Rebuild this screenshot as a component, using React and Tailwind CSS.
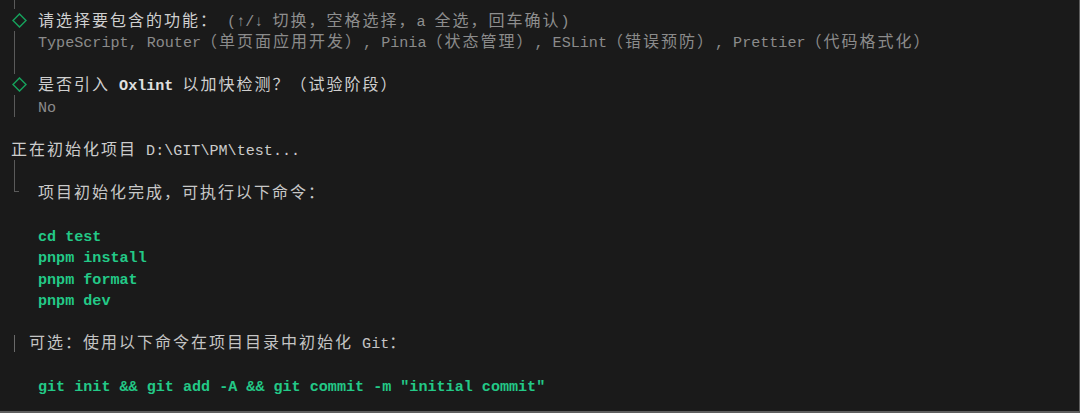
import React from "react";

const CJK = /([\u2E80-\u9FFF\u3000-\u303F\uFF00-\uFFEF]+)/;

function T({ children }) {
  const parts = String(children).split(CJK);
  return parts.map((p, i) =>
    i % 2 ? (
      <span key={i} className="text-[16px] tracking-[2px]">
        {p}
      </span>
    ) : (
      <React.Fragment key={i}>{p}</React.Fragment>
    )
  );
}

function Row({ children }) {
  return <div className="flex h-[21.5px] items-center whitespace-pre leading-[21.5px]">{children}</div>;
}

function Txt({ className, children }) {
  return <span className={"pt-[5px] " + className}>{children}</span>;
}

function Bar() {
  return (
    <div className="w-[27px] shrink-0 self-stretch pl-[3px]">
      <div className="h-full w-px bg-[#5a5a5a]" />
    </div>
  );
}

function Corner() {
  return (
    <div className="w-[27px] shrink-0 self-stretch pl-[3px]">
      <div className="h-[11px] w-[5px] border-b border-l border-[#5a5a5a]" />
    </div>
  );
}

function Diamond() {
  return (
    <div className="flex w-[27px] shrink-0 items-center pl-px">
      <svg width="15" height="15" viewBox="0 0 15 15" className="block">
        <path d="M7.5 1 L14 7.5 L7.5 14 L1 7.5 Z" fill="none" stroke="#17a05c" strokeWidth="1.5" />
      </svg>
    </div>
  );
}

const Empty = () => <Row />;

export default function App() {
  return (
    <div className="h-[413px] w-[1080px] overflow-hidden border-b-2 border-r border-[#5e5e5e] bg-[#1a1a1a] pl-[11px] font-['Liberation_Mono','Noto_Sans_CJK_SC',monospace] text-[15.1px] text-[#cccccc]">
      <div className="flex h-[9.25px]">
        <Bar />
      </div>

      <Row>
        <Diamond />
        <Txt className="text-[#cfcfcf]">
          <T>请选择要包含的功能：</T>
          <span className="text-[#8e8e8e]">
            {" "}
            <T>(↑/↓ 切换，空格选择，a 全选，回车确认)</T>
          </span>
        </Txt>
      </Row>
      <Row>
        <Bar />
        <Txt className="text-[#8b8b8b]">
          <T>TypeScript, Router（单页面应用开发）, Pinia（状态管理）, ESLint（错误预防）, Prettier（代码格式化）</T>
        </Txt>
      </Row>
      <Row>
        <Bar />
      </Row>
      <Row>
        <Diamond />
        <Txt className="text-[#cfcfcf]">
          <T>是否引入 </T>
          <span className="font-bold text-[#e0e0e0]">Oxlint</span>
          <T> 以加快检测？（试验阶段）</T>
        </Txt>
      </Row>
      <Row>
        <Bar />
        <Txt className="text-[#8b8b8b]">No</Txt>
      </Row>
      <Empty />
      <Row>
        <Txt className="text-[#cccccc]">
          <T>正在初始化项目 D:\GIT\PM\test...</T>
        </Txt>
      </Row>
      <Row>
        <Bar />
      </Row>
      <Row>
        <Corner />
        <Txt className="text-[#c8c8c8]">
          <T>项目初始化完成，可执行以下命令：</T>
        </Txt>
      </Row>
      <Empty />
      {["cd test", "pnpm install", "pnpm format", "pnpm dev"].map((c) => (
        <Row key={c}>
          <span className="w-[27px] shrink-0" />
          <Txt className="font-bold text-[#23c987]">{c}</Txt>
        </Row>
      ))}
      <Empty />
      <Row>
        <div className="w-[18px] shrink-0 pl-[3px] pt-[2px]">
          <div className="h-[17px] w-px bg-[#6a6a6a]" />
        </div>
        <Txt className="text-[#c4c4c4]">
          <T>可选：使用以下命令在项目目录中初始化 Git：</T>
        </Txt>
      </Row>
      <Empty />
      <Row>
        <span className="w-[27px] shrink-0" />
        <Txt className="font-bold text-[#23c987]">git init &amp;&amp; git add -A &amp;&amp; git commit -m "initial commit"</Txt>
      </Row>
    </div>
  );
}
